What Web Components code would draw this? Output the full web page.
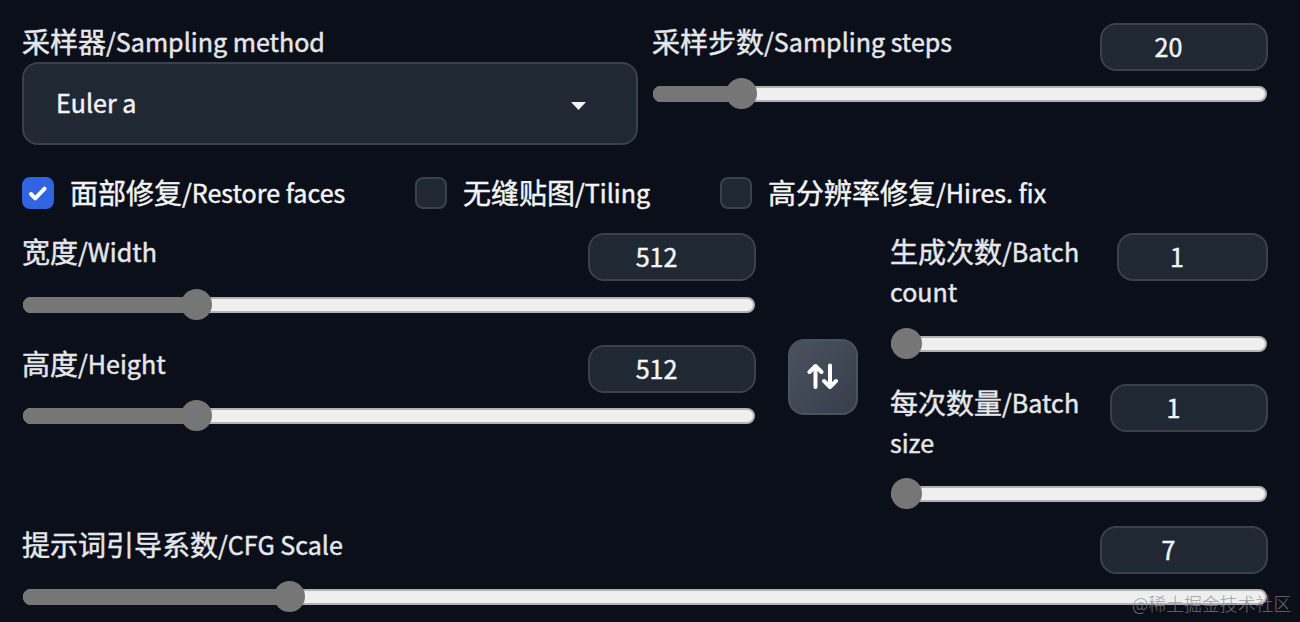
<!DOCTYPE html>
<html lang="zh-CN">
<head>
<meta charset="utf-8">
<title>Stable Diffusion</title>
<style>
	html, body {
		margin: 0;
		height: 100%;
	}

	body {
		background: #0b0f19;
		overflow: hidden;
		color: #f3f4f6;
		font-family: "Noto Sans CJK SC", sans-serif;
		font-size: 28px;
		-webkit-text-stroke: .45px;
	}
</style>
</head>
<body>
<sd-settings></sd-settings>

<script>
// the latin part of a label is set a bit smaller than the chinese part,
// "rest" goes on a second line
class BiText extends HTMLElement {
	constructor() {
		super();
		this.attachShadow({mode: 'open'});
		this.shadowRoot.innerHTML = `
			<style>
			:host {
				display: block;
				line-height: 40px;
				white-space: nowrap;
			}

			.en {
				font-size: 25.07px;
				line-height: 1;
				vertical-align: 1px;
			}

			.rest {
				font-size: 25.07px;
				line-height: 40px;
			}
			</style>
			<slot></slot><span class="en"></span>
			<div class="rest"></div>
		`;
	}

	connectedCallback() {
		this.shadowRoot.querySelector('.en').textContent = this.getAttribute('en') || '';
		this.shadowRoot.querySelector('.rest').textContent = this.getAttribute('rest') || '';
	}
}

class SdDropdown extends HTMLElement {
	constructor() {
		super();
		this.attachShadow({mode: 'open'});
		this.shadowRoot.innerHTML = `
			<style>
			:host {
				display: flex;
				flex-direction: column;
			}

			.label {
				height: 39px;
				margin-top: -2px;
				padding-bottom: 2px;
				color: #e5e7eb;
			}

			.box {
				box-sizing: border-box;
				height: 83px;
				padding: 0 50px 3px 32px;
				border: 2px solid #3a414c;
				border-radius: 16px;
				background: #202933;
				display: flex;
				align-items: center;
				justify-content: space-between;
				font-size: 25.07px;
			}

			svg {
				display: block;
				margin-top: 7px;
			}
			</style>
			<div class="label"><slot name="label"></slot></div>
			<div class="box">
				<slot></slot>
				<svg width="15" height="8" viewBox="0 0 15 8"><path d="M0 0h15L7.5 8z" fill="#f3f4f6"/></svg>
			</div>
		`;
	}
}

class SdCheckbox extends HTMLElement {
	constructor() {
		super();
		this.attachShadow({mode: 'open'});
		this.shadowRoot.innerHTML = `
			<style>
			:host {
				display: flex;
				align-items: center;
				gap: 16px;
				height: 32px;
				white-space: nowrap;
			}

			.box {
				box-sizing: border-box;
				flex: none;
				width: 32px;
				height: 32px;
				border: 2px solid #3a414c;
				border-radius: 8px;
				background: #202933;
			}

			.text {
				padding-bottom: 2px;
			}

			svg {
				display: none;
			}

			:host([checked]) .box {
				border-color: #3164e0;
				background: #3164e0;
			}

			:host([checked]) svg {
				display: block;
			}
			</style>
			<div class="box">
				<svg width="28" height="28" viewBox="0 0 28 28" fill="none" stroke="#fff" stroke-width="4" stroke-linecap="round" stroke-linejoin="round">
					<path d="M7 15l4.2 4.3L20.6 9.6"/>
				</svg>
			</div>
			<div class="text"><slot></slot></div>
		`;
	}
}

class SdSlider extends HTMLElement {
	constructor() {
		super();
		this.attachShadow({mode: 'open'});
		this.shadowRoot.innerHTML = `
			<style>
			:host {
				display: flex;
				flex-direction: column;
				gap: var(--track-gap, 15px);
				color: #e5e7eb;
			}

			.head {
				display: flex;
				justify-content: space-between;
				align-items: flex-start;
				height: var(--head-height, 48px);
			}

			.label {
				margin-top: -2px;
			}

			.number {
				box-sizing: border-box;
				width: var(--number-width, 168px);
				height: 48px;
				padding-right: 31px;
				border: 2px solid #3a414c;
				border-radius: 16px;
				background: #202933;
				color: #f3f4f6;
				font-size: 25.07px;
				line-height: 43px;
				text-align: center;
			}

			.track {
				position: relative;
				box-sizing: border-box;
				height: 16px;
				margin: 0 1px;
				border: 2px solid #b2b2b2;
				border-radius: 8px;
				background: #efefef;
			}

			.fill {
				position: absolute;
				left: -2px;
				top: -2px;
				height: 16px;
				border-radius: 8px 0 0 8px;
				background: #767676;
			}

			.thumb {
				position: absolute;
				top: -9.6px;
				width: 31px;
				height: 31px;
				border-radius: 50%;
				background: #767676;
			}
			</style>
			<div class="head">
				<div class="label"><slot></slot></div>
				<div class="number"></div>
			</div>
			<div class="track">
				<div class="fill"></div>
				<div class="thumb"></div>
			</div>
		`;
	}

	connectedCallback() {
		const offset = Number(this.getAttribute('offset'));
		this.shadowRoot.querySelector('.number').textContent = this.getAttribute('value');
		this.shadowRoot.querySelector('.fill').style.width = offset + 15 + 'px';
		this.shadowRoot.querySelector('.thumb').style.left = offset - 2.4 + 'px';
	}
}

class SdSwapButton extends HTMLElement {
	constructor() {
		super();
		this.attachShadow({mode: 'open'});
		this.shadowRoot.innerHTML = `
			<style>
			:host {
				box-sizing: border-box;
				display: flex;
				align-items: center;
				justify-content: center;
				width: 70px;
				height: 76px;
				border: 2px solid #4a525d;
				border-radius: 16px;
				background: linear-gradient(to bottom right, #49525d, #353e4a);
			}
			</style>
			<svg width="32" height="28" viewBox="0 0 32 28" fill="none" stroke="#fff" stroke-width="4" stroke-linecap="round" stroke-linejoin="round">
				<path d="M8.5 24V3.3M2.5 9l6-6 6 6M23 2.5v21M17 18l6 6 6-6"/>
			</svg>
		`;
	}
}

class SdSettings extends HTMLElement {
	constructor() {
		super();
		this.attachShadow({mode: 'open'});
		this.shadowRoot.innerHTML = `
			<style>
			:host {
				box-sizing: border-box;
				display: block;
				height: 622px;
				padding: 23px 32px 0 22px;
			}

			.top {
				display: grid;
				grid-template-columns: 616px 616px;
				gap: 14px;
				height: 154px;
			}

			.checks {
				display: grid;
				grid-template-columns: 393px 305px auto;
				height: 56px;
			}

			.main {
				display: grid;
				grid-template-columns: 734px 70px 378px;
				gap: 32px;
				height: 293px;
			}

			.size {
				--track-gap: 16px;
				display: flex;
				flex-direction: column;
				gap: 32px;
			}

			.size sd-slider + sd-slider {
				--track-gap: 15px;
			}

			sd-swap-button {
				margin-top: 106px;
			}

			.batch {
				--head-height: 80px;
				display: flex;
				flex-direction: column;
				gap: 32px;
			}

			.count {
				--track-gap: 23px;
				--number-width: 151px;
			}

			.amount {
				--track-gap: 22px;
				--number-width: 158px;
			}

			.watermark {
				position: absolute;
				left: 1132px;
				top: 591px;
				color: rgba(135, 136, 140, .8);
				font-size: 17.9px;
				font-weight: 300;
				line-height: 24px;
				white-space: nowrap;
				-webkit-text-stroke: 0;
			}
			</style>
			<div class="top">
				<sd-dropdown><bi-text slot="label" en="/Sampling method">采样器</bi-text>Euler a</sd-dropdown>
				<sd-slider value="20" offset="73.5"><bi-text en="/Sampling steps">采样步数</bi-text></sd-slider>
			</div>
			<div class="checks">
				<sd-checkbox checked><bi-text en="/Restore faces">面部修复</bi-text></sd-checkbox>
				<sd-checkbox><bi-text en="/Tiling">无缝贴图</bi-text></sd-checkbox>
				<sd-checkbox><bi-text en="/Hires. fix">高分辨率修复</bi-text></sd-checkbox>
			</div>
			<div class="main">
				<div class="size">
					<sd-slider value="512" offset="158"><bi-text en="/Width">宽度</bi-text></sd-slider>
					<sd-slider value="512" offset="158"><bi-text en="/Height">高度</bi-text></sd-slider>
				</div>
				<sd-swap-button></sd-swap-button>
				<div class="batch">
					<sd-slider class="count" value="1" offset="0"><bi-text en="/Batch" rest="count">生成次数</bi-text></sd-slider>
					<sd-slider class="amount" value="1" offset="0"><bi-text en="/Batch" rest="size">每次数量</bi-text></sd-slider>
				</div>
			</div>
			<sd-slider value="7" offset="251"><bi-text en="/CFG Scale">提示词引导系数</bi-text></sd-slider>
			<div class="watermark">@稀土掘金技术社区</div>
		`;
	}
}

customElements.define('bi-text', BiText);
customElements.define('sd-dropdown', SdDropdown);
customElements.define('sd-checkbox', SdCheckbox);
customElements.define('sd-slider', SdSlider);
customElements.define('sd-swap-button', SdSwapButton);
customElements.define('sd-settings', SdSettings);
</script>
</body>
</html>
